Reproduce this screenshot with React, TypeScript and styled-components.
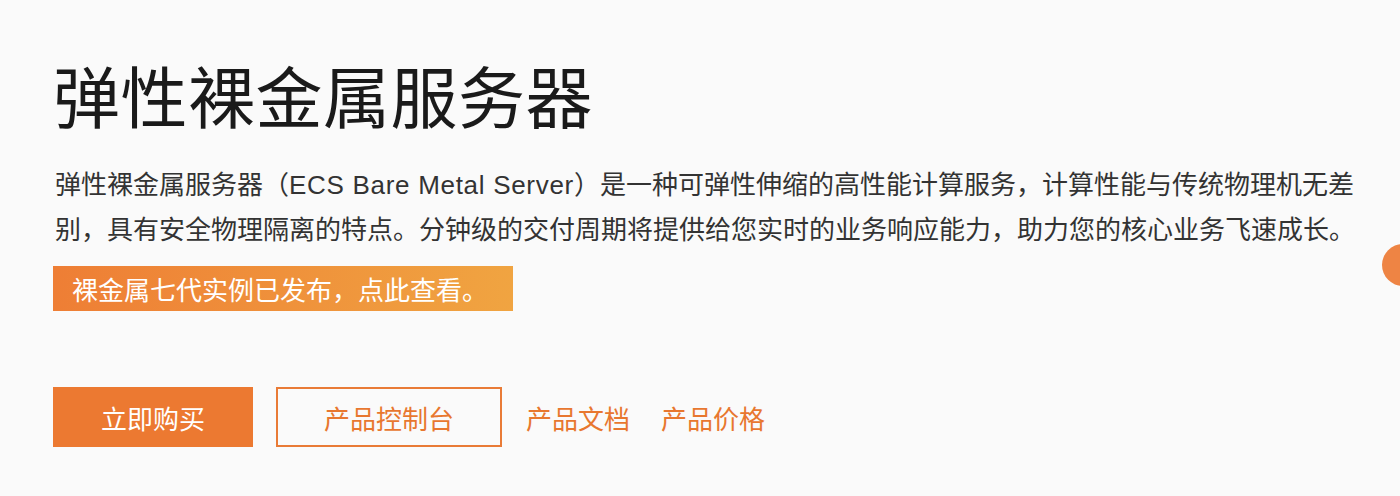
import styled, { createGlobalStyle } from "styled-components";

const GlobalStyle = createGlobalStyle`
  html, body {
    margin: 0;
    padding: 0;
    background: #fafafa;
  }
  body {
    font-family: "Liberation Sans", "Noto Sans CJK SC", sans-serif;
    overflow: hidden;
  }
`;

const Banner = styled.section`
  position: relative;
  width: 1400px;
  height: 496px;
  box-sizing: border-box;
  padding: 49px 0 0 53px;
  background: #fafafa;
  overflow: hidden;
`;

const Title = styled.h1`
  margin: 0;
  font-family: "Noto Sans CJK SC", sans-serif;
  font-size: 67px;
  font-weight: 400;
  line-height: 90px;
  color: #1a1a1a;
  letter-spacing: 0.5px;
`;

const Description = styled.p`
  margin: 24px 0 0 2px;
  font-size: 26px;
  line-height: 45px;
  color: #333;
  white-space: nowrap;
`;

// latin run inside the description is a touch wider in the original
const Latin = styled.span`
  letter-spacing: 0.7px;
`;

const Notice = styled.a`
  display: flex;
  align-items: center;
  width: fit-content;
  height: 45px;
  margin-top: 13px;
  padding: 0 25px 0 19px;
  background: linear-gradient(90deg, #ee7e35 0%, #f0a441 100%);
  color: #fff;
  font-size: 26px;
  text-decoration: none;
  cursor: pointer;
`;

const Actions = styled.div`
  display: flex;
  align-items: center;
  margin-top: 76px;
`;

const ActionButton = styled.a<{ $variant: "primary" | "outline" | "link" }>`
  display: inline-flex;
  align-items: center;
  justify-content: center;
  box-sizing: border-box;
  height: 60px;
  font-size: 26px;
  text-decoration: none;
  cursor: pointer;
  ${({ $variant }) =>
    $variant === "primary"
      ? `width: 200px; background: #ec7931; color: #fff; margin-right: 23px;`
      : $variant === "outline"
      ? `width: 226px; border: 2px solid #e97b36; color: #e8772f; background: transparent; margin-right: 24px;`
      : `color: #e8772f; margin-right: 31px;`}
`;

const FloatDot = styled.div`
  position: absolute;
  left: 1382px;
  top: 244px;
  width: 42px;
  height: 42px;
  border-radius: 50%;
  background: #ee8444;
`;

export default function App() {
  return (
    <>
      <GlobalStyle />
      <Banner>
        <Title>弹性裸金属服务器</Title>
        <Description>
          弹性裸金属服务器（<Latin>ECS Bare Metal Server</Latin>）是一种可弹性伸缩的高性能计算服务，计算性能与传统物理机无差
          <br />
          别，具有安全物理隔离的特点。分钟级的交付周期将提供给您实时的业务响应能力，助力您的核心业务飞速成长。
        </Description>
        <Notice>裸金属七代实例已发布，点此查看。</Notice>
        <Actions>
          <ActionButton $variant="primary">立即购买</ActionButton>
          <ActionButton $variant="outline">产品控制台</ActionButton>
          <ActionButton $variant="link">产品文档</ActionButton>
          <ActionButton $variant="link">产品价格</ActionButton>
        </Actions>
        <FloatDot />
      </Banner>
    </>
  );
}
